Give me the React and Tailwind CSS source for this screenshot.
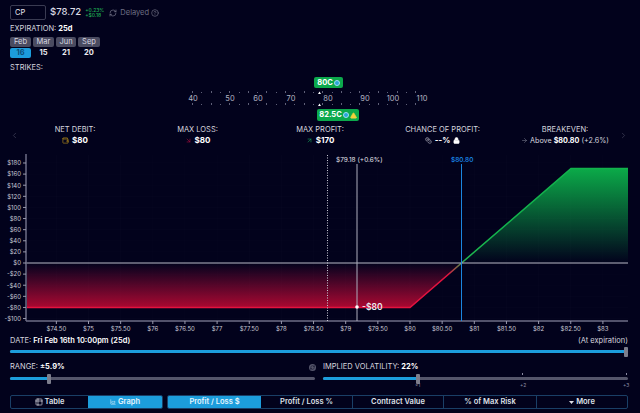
import { RefreshCw, CircleHelp, Table2, ChevronLeft, ChevronRight, TriangleAlert, Lock, ArrowRight, ArrowDownRight, ArrowUpRight, Wallet, Coins, ChartArea } from "lucide-react";

const FONT = { fontFamily: "Inter, sans-serif" };

// =========================
// STRIKES RULER
// =========================
const strikeLabels = [
  [40, 193],
  [50, 230],
  [60, 258],
  [70, 291],
  [80, 328],
  [90, 365],
  [100, 393],
  [110, 422],
];

const rulerDots = [];
for (let x = 192; x <= 424; x += 9.3) rulerDots.push(Math.round(x));

function StrikeRuler() {
  return (
    <div className="relative h-[44px]">
      <svg width="640" height="44" className="block">
        {rulerDots.map((x, i) => (
          <g key={x} fill="#5f6078">
            <rect x={x} y={i % 2 ? 15 : 14} width="1" height={i % 2 ? 1 : 2} />
            <rect x={x} y={i % 2 ? 27 : 26} width="1" height={i % 2 ? 1 : 2} />
          </g>
        ))}
        <polygon points="318,17 321,17 319.5,14.5" fill="#fff" />
        <polygon points="318,29 321,29 319.5,26.5" fill="#fff" />
        {strikeLabels.map(([label, x]) => (
          <text key={label} x={x} y="24" textAnchor="middle" fontSize="7.5" fill="#b4b4c2">
            {label}
          </text>
        ))}
      </svg>
      <div className="absolute left-[314px] top-0 flex h-[11px] w-[29px] items-center justify-center gap-[1px] rounded-[2px] bg-[#0ca94c] text-[7.5px] font-bold text-white">
        80C
        <span className="h-[6px] w-[6px] rounded-full border border-[#9fdcf5] bg-[#2aa7d8]" />
      </div>
      <div className="absolute left-[317px] top-[32px] flex h-[12px] w-[42px] items-center justify-center gap-[1px] rounded-[2px] bg-[#0ca94c] text-[7.5px] font-bold text-white">
        82.5C
        <span className="h-[6px] w-[6px] rounded-full border border-[#9fdcf5] bg-[#2aa7d8]" />
        <TriangleAlert size={7} className="fill-[#f2d13c] text-[#f2d13c]" />
      </div>
    </div>
  );
}

// =========================
// METRICS
// =========================
function Metric({ label, width, children }) {
  return (
    <div className={`flex flex-col items-center ${width}`}>
      <span className="h-[10px] text-[7.5px] leading-[10px] text-[#d6d6df]">{label}</span>
      <div className="flex h-[11px] items-center gap-[3px] text-[8px] font-bold leading-[11px] text-white">
        {children}
      </div>
    </div>
  );
}

// =========================
// CHART
// =========================
const money = (v) => 263 - v * 0.5556;
const price = (p) => 410 + (p - 80) * 64.3;

const yTicks = [180, 160, 140, 120, 100, 80, 60, 40, 20, 0, -20, -40, -60, -80, -100];
const xTicks = [74.5, 75, 75.5, 76, 76.5, 77, 77.5, 78, 78.5, 79, 79.5, 80, 80.5, 81, 81.5, 82, 82.5, 83];

function PayoffChart() {
  const top = 150;
  return (
    <svg width="640" height="185" viewBox={`0 ${top} 640 185`} className="block" fontFamily="Inter, sans-serif">
      <defs>
        <linearGradient id="lossFill" x1="0" y1="263" x2="0" y2="307" gradientUnits="userSpaceOnUse">
          <stop offset="0" stopColor="#a80a3c" stopOpacity="0" />
          <stop offset="1" stopColor="#a80830" stopOpacity="1" />
        </linearGradient>
        <linearGradient id="gainFill" x1="0" y1="168" x2="0" y2="263" gradientUnits="userSpaceOnUse">
          <stop offset="0" stopColor="#0bab49" stopOpacity="1" />
          <stop offset="1" stopColor="#0bab49" stopOpacity="0" />
        </linearGradient>
        <linearGradient id="edge" x1="410" y1="0" x2="500" y2="0" gradientUnits="userSpaceOnUse">
          <stop offset="0" stopColor="#e3123f" />
          <stop offset="0.42" stopColor="#e3123f" />
          <stop offset="0.62" stopColor="#1fb84f" />
          <stop offset="1" stopColor="#12b24c" />
        </linearGradient>
      </defs>

      {yTicks.map((v) => (
        <line key={v} x1="27" x2="628" y1={money(v)} y2={money(v)} stroke="#ffffff" strokeOpacity="0.015" />
      ))}
      {xTicks.map((p) => (
        <line key={p} x1={price(p)} x2={price(p)} y1="155" y2="320" stroke="#ffffff" strokeOpacity="0.015" />
      ))}

      <polygon
        points={`27,${money(0)} ${price(80.8)},${money(0)} 410,${money(-80)} 27,${money(-80)}`}
        fill="url(#lossFill)"
      />
      <polygon
        points={`${price(80.8)},${money(0)} 571,${money(170)} 628,${money(170)} 628,${money(0)}`}
        fill="url(#gainFill)"
      />
      <polyline
        points={`27,${money(-80)} 410,${money(-80)} 571,${money(170)} 628,${money(170)}`}
        fill="none"
        stroke="url(#edge)"
        strokeWidth="1.5"
      />

      <line x1="26" x2="628" y1={money(0)} y2={money(0)} stroke="#b9b9c6" />
      <line x1="26" x2="26" y1="154" y2="321" stroke="#6e6e86" strokeWidth="1.5" />
      <line x1="26" x2="628" y1="321" y2="321" stroke="#6e6e86" strokeWidth="1.5" />

      {yTicks.map((v) => (
        <g key={v}>
          <line x1="23" x2="26" y1={money(v)} y2={money(v)} stroke="#9a9aae" />
          <text x="21" y={money(v) + 2.3} textAnchor="end" fontSize="6" fill="#c9c9d4">
            {v < 0 ? `-$${-v}` : `$${v}`}
          </text>
        </g>
      ))}
      {xTicks.map((p) => (
        <g key={p}>
          <line x1={price(p)} x2={price(p)} y1="321" y2="324" stroke="#9a9aae" />
          <text x={price(p)} y="331" textAnchor="middle" fontSize="6" fill="#c9c9d4">
            ${Number.isInteger(p) ? p : p.toFixed(2)}
          </text>
        </g>
      ))}

      <line x1="327.5" x2="327.5" y1="155" y2="321" stroke="#c9c9d4" strokeDasharray="1 1.5" />
      <line x1="357" x2="357" y1="164" y2="321" stroke="#aeaebd" />
      <line x1="461.5" x2="461.5" y1="164" y2="321" stroke="#1b86e0" />

      <text x="336" y="162" fontSize="6.5" fill="#e2e2ea">$79.18 (+0.6%)</text>
      <text x="451" y="162" fontSize="6.5" fontWeight="500" fill="#1b8ef0">$80.80</text>

      <circle cx="357" cy="307" r="1.8" fill="#fff" />
      <text x="362" y="310" fontSize="8.5" fontWeight="600" fill="#ececf2">-$80</text>
    </svg>
  );
}

// =========================
// SLIDERS
// =========================
function Slider({ fill, thumb }) {
  return (
    <div className="relative h-[10px] w-full">
      <div className="absolute inset-x-0 top-[3px] h-[3px] rounded-full bg-[#55566b]" />
      <div className={`absolute left-0 top-[3px] h-[3px] rounded-l-full bg-[#1c9ddc] ${fill}`} />
      <div className={`absolute top-0 h-[10px] w-[4px] rounded-[1px] bg-[#7d7e8c] ${thumb}`} />
    </div>
  );
}

function SegButton({ active, className = "", children }) {
  return (
    <div
      className={`flex items-center justify-center gap-[2px] text-[7.5px] font-semibold ${
        active ? "bg-[#1c9ddc] text-[#e6f5fd]" : "text-[#dfe0e8]"
      } ${className}`}
    >
      {children}
    </div>
  );
}

export default function App() {
  const months = [
    ["Feb", "w-[21px]"],
    ["Mar", "w-[21px]"],
    ["Jun", "w-[20px]"],
    ["Sep", "w-[22px]"],
  ];
  const days = [
    ["16", "w-[21px]"],
    ["15", "w-[21px]"],
    ["21", "w-[20px]"],
    ["20", "w-[22px]"],
  ];

  return (
    <div style={FONT} className="h-[413px] w-[640px] overflow-hidden bg-[#02021c] pt-[5px] text-white">
      {/* HEADER */}
      <div className="flex h-[15px] items-center pl-[10px]">
        <div className="flex h-[15px] w-[36px] items-center rounded-[2px] border border-[#3a3b52] pl-[4px] text-[7.5px] text-[#e8e8ee]">
          CP
        </div>
        <span className="ml-[4px] text-[9.5px] font-medium text-[#dcdce4]">$78.72</span>
        <div className="ml-[4px] flex flex-col text-[5px] font-medium leading-[5px] text-[#1fae55]">
          <span>+0.23%</span>
          <span>+$0.18</span>
        </div>
        <RefreshCw size={8} className="ml-[5px] text-[#7b7c90]" />
        <span className="ml-[3px] text-[7.5px] text-[#6f7085]">Delayed</span>
        <CircleHelp size={8} className="ml-[2px] text-[#6f7085]" />
      </div>

      {/* EXPIRATION */}
      <div className="mt-[4px] h-[10px] pl-[10px] text-[7.5px] leading-[10px] text-[#d6d6df]">
        EXPIRATION: <span className="font-bold text-white">25d</span>
      </div>
      <div className="mt-[3px] flex gap-[2px] pl-[10px]">
        {months.map(([m, w]) => (
          <div key={m} className={`flex h-[10px] items-center justify-center rounded-[2px] bg-[#4a4b60] text-[7.5px] text-[#d8d8e0] ${w}`}>
            {m}
          </div>
        ))}
      </div>
      <div className="mt-[1px] flex gap-[2px] pl-[10px]">
        {days.map(([d, w], i) => (
          <div
            key={d}
            className={`flex h-[10px] items-center justify-center rounded-[2px] text-[7.5px] font-bold ${w} ${
              i === 0 ? "bg-[#1c9ddc] text-[#0d4f78]" : "text-[#ececf2]"
            }`}
          >
            {d}
          </div>
        ))}
      </div>
      <div className="mt-[5px] h-[10px] pl-[10px] text-[7.5px] leading-[10px] text-[#d6d6df]">STRIKES:</div>

      <div className="mt-[4px]">
        <StrikeRuler />
      </div>

      {/* METRICS */}
      <div className="relative mt-[4px] flex h-[21px] justify-between pl-[15px] pr-[15px]">
        <ChevronLeft size={9} className="absolute left-[10px] top-[6px] text-[#3d3e55]" />
        <Metric label="NET DEBIT:" width="w-[120px]">
          <Wallet size={7} className="text-[#c89b1d]" />
          <span>$80</span>
        </Metric>
        <Metric label="MAX LOSS:" width="w-[120px]">
          <ArrowDownRight size={7} className="text-[#b01040]" />
          <span>$80</span>
        </Metric>
        <Metric label="MAX PROFIT:" width="w-[120px]">
          <ArrowUpRight size={7} className="text-[#14a75b]" />
          <span>$170</span>
        </Metric>
        <Metric label="CHANCE OF PROFIT:" width="w-[120px]">
          <Coins size={7} className="text-[#b9b9c6]" />
          <span>--%</span>
          <Lock size={7} className="fill-white text-white" />
        </Metric>
        <div className="flex w-[120px] flex-col items-center">
          <span className="h-[10px] text-[7.5px] leading-[10px] text-[#d6d6df]">BREAKEVEN:</span>
          <div className="flex h-[11px] items-center gap-[2px] whitespace-nowrap text-[7.2px] leading-[11px] text-[#d6d6df]">
            <ArrowRight size={7} className="text-[#77788c]" />
            Above <span className="font-bold text-white">$80.80</span> (+2.6%)
          </div>
        </div>
        <ChevronRight size={9} className="absolute right-[12px] top-[6px] text-[#3d3e55]" />
      </div>

      {/* CHART */}
      <div className="mt-[4px]">
        <PayoffChart />
      </div>

      {/* DATE */}
      <div className="mt-[1px] flex h-[10px] items-center justify-between pl-[10px] pr-[12px] text-[7.5px] leading-[10px] text-[#d6d6df]">
        <span>
          DATE: <span className="font-semibold text-white">Fri Feb 16th 10:00pm (25d)</span>
        </span>
        <span>(At expiration)</span>
      </div>
      <div className="mt-[1px] pl-[10px] pr-[12px]">
        <Slider fill="w-[614px]" thumb="left-[614px]" />
      </div>

      {/* RANGE / IV */}
      <div className="mt-[5px] flex gap-[8px] pl-[10px] pr-[12px]">
        <div className="w-[305px]">
          <div className="flex h-[10px] items-center justify-between text-[7.5px] text-[#d6d6df]">
            <span>
              RANGE: <span className="font-bold text-white">±5.9%</span>
            </span>
            <span className="mr-[-1px] flex h-[7px] w-[7px] items-center justify-center rounded-full bg-[#55566b]">
              <RefreshCw size={5} className="text-[#02021c]" />
            </span>
          </div>
          <div className="mt-[2px]">
            <Slider fill="w-[39px]" thumb="left-[37px]" />
          </div>
        </div>
        <div className="relative w-[305px]">
          <div className="flex h-[10px] items-center text-[7.5px] text-[#d6d6df]">
            <span>
              IMPLIED VOLATILITY: <span className="font-bold text-white">22%</span>
            </span>
          </div>
          <div className="mt-[2px]">
            <Slider fill="w-[95px]" thumb="left-[93px]" />
          </div>
          <span className="absolute left-[199px] top-[11px] h-[2px] w-px bg-[#8b8ba3]" />
          <span className="absolute left-[303px] top-[11px] h-[2px] w-px bg-[#8b8ba3]" />
          <span className="absolute left-[92px] top-[20px] text-[5px] leading-[6px] text-[#8b8ba3]">×1</span>
          <span className="absolute left-[197px] top-[20px] text-[5px] leading-[6px] text-[#8b8ba3]">+2</span>
          <span className="absolute left-[300px] top-[20px] text-[5px] leading-[6px] text-[#8b8ba3]">+3</span>
        </div>
      </div>

      {/* BUTTONS */}
      <div className="mt-[11px] flex gap-[4px] pl-[10px] pr-[12px]">
        <div className="flex h-[14px] w-[153px] overflow-hidden rounded-[2px] border border-[#1a3f66]">
          <SegButton className="w-[77px]">
            <Table2 size={8} />
            Table
          </SegButton>
          <SegButton active className="flex-1">
            <ChartArea size={6} />
            Graph
          </SegButton>
        </div>
        <div className="flex h-[14px] w-[461px] overflow-hidden rounded-[2px] border border-[#1a3f66]">
          <SegButton active className="w-[93px]">Profit / Loss $</SegButton>
          <SegButton className="w-[92px] border-r border-[#1a3f66]">Profit / Loss %</SegButton>
          <SegButton className="w-[91px] border-r border-[#1a3f66]">Contract Value</SegButton>
          <SegButton className="w-[93px] border-r border-[#1a3f66]">% of Max Risk</SegButton>
          <SegButton className="flex-1">
            <svg width="5" height="3" viewBox="0 0 5 3">
              <polygon points="0,0 5,0 2.5,3" fill="currentColor" />
            </svg>
            More
          </SegButton>
        </div>
      </div>
    </div>
  );
}
